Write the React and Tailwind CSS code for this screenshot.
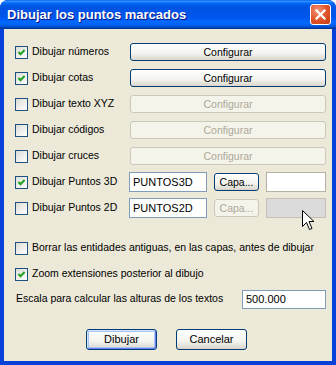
import React from "react";

const Check = ({ checked }) => (
  <span className="flex h-[13px] w-[13px] shrink-0 items-center justify-center border border-[#1c5180] bg-[linear-gradient(135deg,#dcdcd7,#ffffff)]">
    {checked && (
      <svg width="9" height="9" viewBox="0 0 9 9">
        <path d="M1.5 4 L3.5 6.2 L7.6 2" stroke="#21a121" strokeWidth="2" fill="none" />
      </svg>
    )}
  </span>
);

const XpButton = ({ children, disabled, primary, className = "" }) => {
  const base =
    "flex items-center justify-center rounded-[3px] border text-[10.5px] leading-none";
  const look = disabled
    ? "border-[#cac8bb] bg-[#f5f4ea] text-[#aca899]"
    : primary
    ? "border-[#003c74] bg-[linear-gradient(#ffffff,#f3f3ef_60%,#d8d5cb)] text-black shadow-[inset_1px_1px_0_#cee7ff,inset_-1px_-1px_0_#6982ee,inset_0_0_0_2px_#a9c3f5]"
    : "border-[#003c74] bg-[linear-gradient(#ffffff,#f3f3ef_60%,#d8d5cb)] text-black";
  return <div className={`${base} ${look} ${className}`}>{children}</div>;
};

const TextBox = ({ value, className = "" }) => (
  <div className={`flex items-center border border-[#7f9db9] bg-white pl-[3px] text-[11px] text-black ${className}`}>
    {value}
  </div>
);

const configRows = [
  { label: "Dibujar números", checked: true, enabled: true },
  { label: "Dibujar cotas", checked: true, enabled: true },
  { label: "Dibujar texto XYZ", checked: false, enabled: false },
  { label: "Dibujar códigos", checked: false, enabled: false },
  { label: "Dibujar cruces", checked: false, enabled: false },
];

const App = () => {
  return (
    <div className="flex h-[365px] w-[336px] flex-col overflow-hidden rounded-t-[8px] bg-[#0841d9] font-['Liberation_Sans',Arial,sans-serif] text-black">
      {/* title bar */}
      <div className="flex h-[29px] shrink-0 items-center justify-between bg-[linear-gradient(#0058ee_0%,#3593ff_4%,#288eff_6%,#127dff_8%,#036ffc_10%,#0262ee_14%,#0057e5_20%,#0054e3_24%,#0055eb_56%,#005bf5_66%,#026afe_76%,#0062ef_86%,#0052d6_92%,#0040ab_96%,#003092_100%)] pl-[7px] pr-[5px]">
        <span className="text-[13px] font-bold text-white [text-shadow:1px_1px_0_#0a1883]">
          Dibujar los puntos marcados
        </span>
        <div className="flex h-[21px] w-[21px] items-center justify-center rounded-[3px] border border-white bg-[radial-gradient(circle_at_35%_30%,#f0987a,#e2552c_50%,#c23c12)]">
          <svg width="11" height="11" viewBox="0 0 11 11">
            <path d="M1.5 1.5 L9.5 9.5 M9.5 1.5 L1.5 9.5" stroke="white" strokeWidth="2.2" strokeLinecap="square" />
          </svg>
        </div>
      </div>

      {/* body */}
      <div className="relative mx-[4px] mb-[4px] flex flex-1 flex-col bg-[#ece9d8] pl-[11px] pr-[6px] pt-[10px] text-[10.5px]">
        {configRows.map((row) => (
          <div key={row.label} className="flex h-[26px] items-center">
            <div className="flex w-[115px] items-center gap-[4px]">
              <Check checked={row.checked} />
              <span>{row.label}</span>
            </div>
            <XpButton disabled={!row.enabled} className="h-[18px] w-[196px]">
              Configurar
            </XpButton>
          </div>
        ))}

        <div className="flex h-[26px] items-center">
          <div className="flex w-[114px] items-center gap-[4px]">
            <Check checked />
            <span>Dibujar Puntos 3D</span>
          </div>
          <TextBox value="PUNTOS3D" className="h-[20px] w-[78px]" />
          <XpButton className="ml-[7px] h-[18px] w-[45px]">Capa...</XpButton>
          <div className="ml-[7px] h-[20px] w-[60px] border border-[#b5b2a5] bg-white" />
        </div>

        <div className="flex h-[26px] items-center">
          <div className="flex w-[114px] items-center gap-[4px]">
            <Check />
            <span>Dibujar Puntos 2D</span>
          </div>
          <TextBox value="PUNTOS2D" className="h-[20px] w-[78px]" />
          <XpButton disabled className="ml-[7px] h-[18px] w-[45px]">
            Capa...
          </XpButton>
          <div className="ml-[7px] h-[20px] w-[60px] border border-[#c3c1b5] bg-[#dbdbdb]" />
        </div>

        <div className="mt-[14px] flex h-[26px] items-center gap-[4px]">
          <Check />
          <span>Borrar las entidades antiguas, en las capas, antes de dibujar</span>
        </div>

        <div className="flex h-[26px] items-center gap-[4px]">
          <Check checked />
          <span>Zoom extensiones posterior al dibujo</span>
        </div>

        <div className="mt-[2px] flex h-[20px] items-center justify-between">
          <span className="pl-px">Escala para calcular las alturas de los textos</span>
          <TextBox value="500.000" className="h-[19px] w-[84px]" />
        </div>

        <div className="ml-[71px] mt-[20px] flex gap-[19px]">
          <XpButton primary className="h-[21px] w-[71px] text-[11px]">
            Dibujar
          </XpButton>
          <XpButton className="h-[21px] w-[71px] text-[11px]">Cancelar</XpButton>
        </div>

        {/* mouse pointer */}
        <svg
          className="absolute left-[298px] top-[181px]"
          width="13"
          height="21"
          viewBox="0 0 13 21"
        >
          <path
            d="M0.5 0.5 L0.5 16.5 L4.5 12.5 L7.5 19.5 L10 18.5 L7 11.5 L12 11.5 Z"
            fill="white"
            stroke="black"
            strokeWidth="1"
          />
        </svg>
      </div>
    </div>
  );
};

export default App;
